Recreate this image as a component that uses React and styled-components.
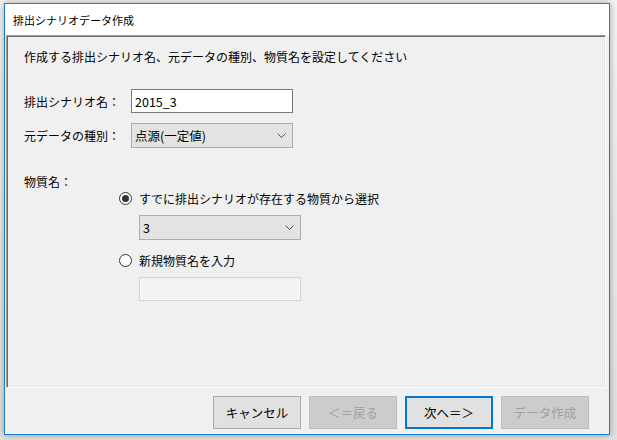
import styled, { createGlobalStyle } from "styled-components";

const GlobalStyle = createGlobalStyle`
  html, body {
    margin: 0;
    padding: 0;
    background: #ffffff;
    font-family: "Noto Sans CJK JP", "Noto Sans", sans-serif;
    color: #000;
  }
`;

const Page = styled.div`
  width: 617px;
  height: 440px;
  padding: 3px 0 0 4px;
  box-sizing: border-box;
  background: linear-gradient(#f4f4f4, #e2e2e2);
`;

const Window = styled.div`
  width: 606px;
  height: 432px;
  box-sizing: border-box;
  border: 1px solid #1b7fd4;
  background: #f0f0f0;
  display: flex;
  flex-direction: column;
  box-shadow: 0 0 7px rgba(0, 0, 0, 0.35);
`;

const TitleBar = styled.div`
  height: 31px;
  background: #ffffff;
  display: flex;
  align-items: center;
  padding-left: 8px;
  font-size: 11px;
  flex-shrink: 0;
`;

const Panel = styled.div`
  height: 353px;
  width: 600px;
  margin-left: 1px;
  box-sizing: border-box;
  border-style: solid;
  border-width: 1px;
  border-color: #a0a0a0 #ffffff #ffffff #a0a0a0;
  box-shadow: inset 1px 1px 0 #696969, inset -1px -1px 0 #e3e3e3;
  padding: 13px 0 0 17px;
  font-size: 12px;
  flex-shrink: 0;
`;

const Heading = styled.div`
  height: 16px;
  line-height: 16px;
  margin-bottom: 24px;
`;

const FieldRow = styled.div`
  display: flex;
  align-items: center;
  margin-bottom: ${(p) => p.gap || 0}px;
`;

const Label = styled.div`
  width: 107px;
  flex-shrink: 0;
`;

const TextBox = styled.div`
  width: 162px;
  height: 24px;
  box-sizing: border-box;
  border: 1px solid ${(p) => (p.disabled ? "#d4d4d4" : "#7a7a7a")};
  background: ${(p) => (p.disabled ? "#f3f3f3" : "#ffffff")};
  display: flex;
  align-items: center;
  padding-left: 3px;
  font-size: 12.5px;
`;

const Combo = styled.div`
  width: 162px;
  height: 25px;
  box-sizing: border-box;
  border: 1px solid #adadad;
  background: #e3e3e3;
  display: flex;
  align-items: center;
  justify-content: space-between;
  padding: 0 6px 0 3px;
  font-size: 12.5px;
`;

const Section = styled.div`
  height: 16px;
  line-height: 16px;
`;

const RadioRow = styled.label`
  display: flex;
  align-items: center;
  height: 16px;
  margin-left: 95px;
  gap: 7px;
  margin-bottom: ${(p) => p.gap || 0}px;
`;

const RadioCircle = styled.span`
  width: 13px;
  height: 13px;
  box-sizing: border-box;
  border: 1px solid #333333;
  border-radius: 50%;
  background: #ffffff;
  display: flex;
  align-items: center;
  justify-content: center;
  &::after {
    content: "";
    width: 7px;
    height: 7px;
    border-radius: 50%;
    background: #333333;
    display: ${(p) => (p.checked ? "block" : "none")};
  }
`;

const Indent = styled.div`
  margin-left: 115px;
  margin-bottom: ${(p) => p.gap || 0}px;
`;

const Footer = styled.div`
  flex: 1;
  display: flex;
  justify-content: flex-end;
  align-items: flex-start;
  gap: 8px;
  padding: 8px 20px 0 0;
`;

const Button = styled.div`
  width: 88px;
  height: 33px;
  box-sizing: border-box;
  border: ${(p) => (p.primary ? "2px solid #0078d7" : p.disabled ? "1px solid #bfbfbf" : "1px solid #adadad")};
  background: ${(p) => (p.disabled ? "#cccccc" : "#e1e1e1")};
  color: ${(p) => (p.disabled ? "#a0a0a0" : "#000")};
  display: flex;
  align-items: center;
  justify-content: center;
  font-size: 12.5px;
`;

const Chevron = () => (
  <svg width="9" height="5" viewBox="0 0 9 5">
    <path d="M0.5 0.5 L4.5 4.5 L8.5 0.5" fill="none" stroke="#555" strokeWidth="1" />
  </svg>
);

export default function App() {
  return (
    <>
      <GlobalStyle />
      <Page>
        <Window>
          <TitleBar>排出シナリオデータ作成</TitleBar>
          <Panel>
            <Heading>作成する排出シナリオ名、元データの種別、物質名を設定してください</Heading>
            <FieldRow gap={10}>
              <Label>排出シナリオ名：</Label>
              <TextBox>2015_3</TextBox>
            </FieldRow>
            <FieldRow gap={26}>
              <Label>元データの種別：</Label>
              <Combo>
                <span>点源(一定値)</span>
                <Chevron />
              </Combo>
            </FieldRow>
            <Section>物質名：</Section>
            <RadioRow gap={9}>
              <RadioCircle checked />
              <span>すでに排出シナリオが存在する物質から選択</span>
            </RadioRow>
            <Indent gap={12}>
              <Combo>
                <span>3</span>
                <Chevron />
              </Combo>
            </Indent>
            <RadioRow gap={9}>
              <RadioCircle />
              <span>新規物質名を入力</span>
            </RadioRow>
            <Indent>
              <TextBox disabled />
            </Indent>
          </Panel>
          <Footer>
            <Button>キャンセル</Button>
            <Button disabled>＜＝戻る</Button>
            <Button primary>次へ＝＞</Button>
            <Button disabled>データ作成</Button>
          </Footer>
        </Window>
      </Page>
    </>
  );
}
